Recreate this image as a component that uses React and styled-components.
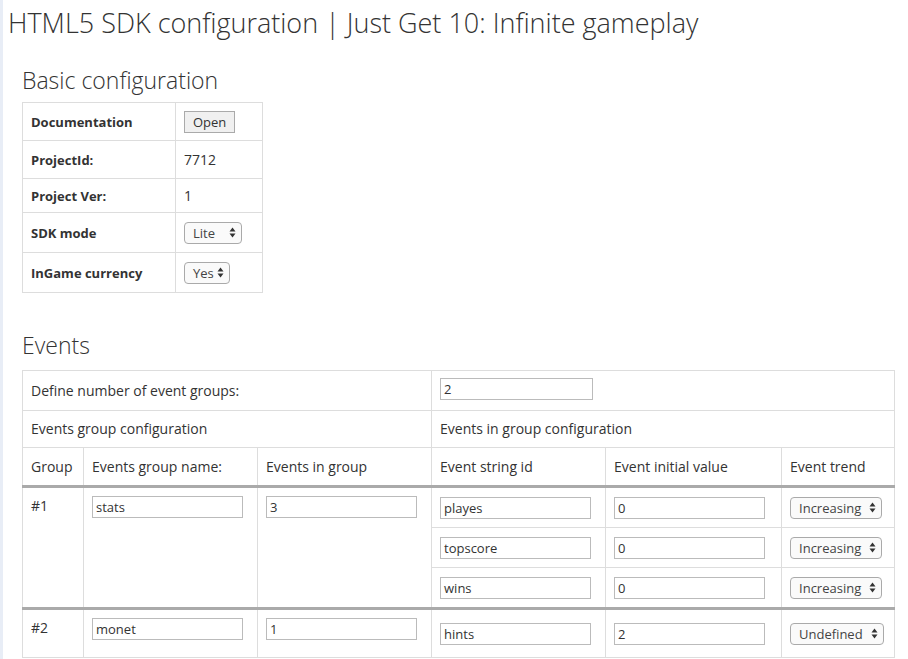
import React from 'react';
import styled, { createGlobalStyle } from 'styled-components';

const Global = createGlobalStyle`
  html, body { margin: 0; background: #fff; }
  body {
    font-family: "Open Sans", "Liberation Sans", sans-serif;
    color: #333;
    font-size: 14px;
    border-left: 3px solid #e8edf6;
    min-height: 659px;
    box-sizing: border-box;
  }
`;

const Page = styled.div`
  padding: 4px 0 0 5px;
`;

const Title = styled.h1`
  font-weight: 300;
  font-size: 27px;
  margin: 0;
  line-height: 38px;
  color: #333;
`;

const Section = styled.div`
  padding-left: 14px;
`;

const Heading = styled.h2`
  font-weight: 300;
  font-size: 23px;
  line-height: 32px;
  margin: ${p => p.top}px 0 ${p => p.bottom}px;
  color: #333;
`;

const Table = styled.table`
  border-collapse: collapse;
  width: ${p => p.width}px;
  table-layout: fixed;
  td {
    border: 1px solid #ddd;
    padding: 0 8px;
    line-height: 20px;
    vertical-align: middle;
  }
`;

const Label = styled.td`
  font-weight: 700;
  font-size: 13px;
  height: ${p => p.h}px;
`;

const Btn = styled.button`
  font-family: inherit;
  font-size: 13px;
  line-height: 16px;
  color: #333;
  background: #f0f0f0;
  border: 1px solid #aaa;
  padding: 2px 8px;
`;

const Select = styled.span`
  display: inline-flex;
  align-items: center;
  gap: ${p => p.gap}px;
  font-size: 13px;
  color: #444;
  border: 1px solid #aaa;
  border-radius: 4px;
  background: #fafafa;
  padding: 0 5px 0 8px;
  height: 20px;
  vertical-align: middle;
`;

const Arrows = () => (
  <svg width="7" height="11" viewBox="0 0 7 11">
    <path d="M3.5 0.5L6.5 4.5H0.5Z M3.5 10.5L0.5 6.5H6.5Z" fill="#333" />
  </svg>
);

const Row = styled.tr`
  border-top: ${p => (p.thick ? '3px solid #aaa' : 'none')};
  td { height: ${p => p.h}px; }
`;

const Input = styled.div`
  width: ${p => p.w || 151}px;
  height: 22px;
  border: 1px solid #bbb;
  box-sizing: border-box;
  font-size: 13px;
  line-height: 20px;
  padding-left: 3px;
  color: #333;
`;

const Cell = styled.td`
  vertical-align: ${p => (p.top ? 'top' : 'middle')} !important;
  padding-top: ${p => (p.top ? 8 : 0)}px !important;
`;

const events = [
  { g: '#1', name: 'stats', count: '3', rows: [['playes', '0', 'Increasing'], ['topscore', '0', 'Increasing'], ['wins', '0', 'Increasing']] },
  { g: '#2', name: 'monet', count: '1', rows: [['hints', '2', 'Undefined']] },
];

export default function App() {
  return (
    <Page>
      <Global />
      <Title>HTML5 SDK configuration | Just Get 10: Infinite gameplay</Title>
      <Section>
        <Heading top={22} bottom={6}>Basic configuration</Heading>
        <Table width={241}>
          <colgroup><col style={{ width: 153 }} /><col /></colgroup>
          <tbody>
            <tr><Label h={37}>Documentation</Label><td><Btn>Open</Btn></td></tr>
            <tr><Label h={37}>ProjectId:</Label><td>7712</td></tr>
            <tr><Label h={33}>Project Ver:</Label><td>1</td></tr>
            <tr><Label h={39}>SDK mode</Label><td><Select gap={14}>Lite <Arrows /></Select></td></tr>
            <tr><Label h={39}>InGame currency</Label><td><Select gap={3}>Yes <Arrows /></Select></td></tr>
          </tbody>
        </Table>

        <Heading top={36} bottom={9}>Events</Heading>
        <Table width={873}>
          <colgroup>
            <col style={{ width: 61 }} /><col style={{ width: 174 }} /><col style={{ width: 174 }} />
            <col style={{ width: 174 }} /><col style={{ width: 176 }} /><col />
          </colgroup>
          <tbody>
            <Row h={39}><td colSpan={3}>Define number of event groups:</td><td colSpan={3}><Input w={153} style={{ marginTop: -4 }}>2</Input></td></Row>
            <Row h={36}><td colSpan={3}>Events group configuration</td><td colSpan={3}>Events in group configuration</td></Row>
            <Row h={37}>
              <td>Group</td><td>Events group name:</td><td>Events in group</td>
              <td>Event string id</td><td>Event initial value</td><td>Event trend</td>
            </Row>
            {events.map(ev => ev.rows.map((r, i) => (
              <Row key={ev.g + i} h={39} thick={i === 0}>
                {i === 0 && <>
                  <Cell top rowSpan={ev.rows.length}>{ev.g}</Cell>
                  <Cell top rowSpan={ev.rows.length}><Input>{ev.name}</Input></Cell>
                  <Cell top rowSpan={ev.rows.length}><Input>{ev.count}</Input></Cell>
                </>}
                <td><Input>{r[0]}</Input></td>
                <td><Input>{r[1]}</Input></td>
                <td><Select gap={8}>{r[2]} <Arrows /></Select></td>
              </Row>
            )))}
          </tbody>
        </Table>
      </Section>
    </Page>
  );
}
